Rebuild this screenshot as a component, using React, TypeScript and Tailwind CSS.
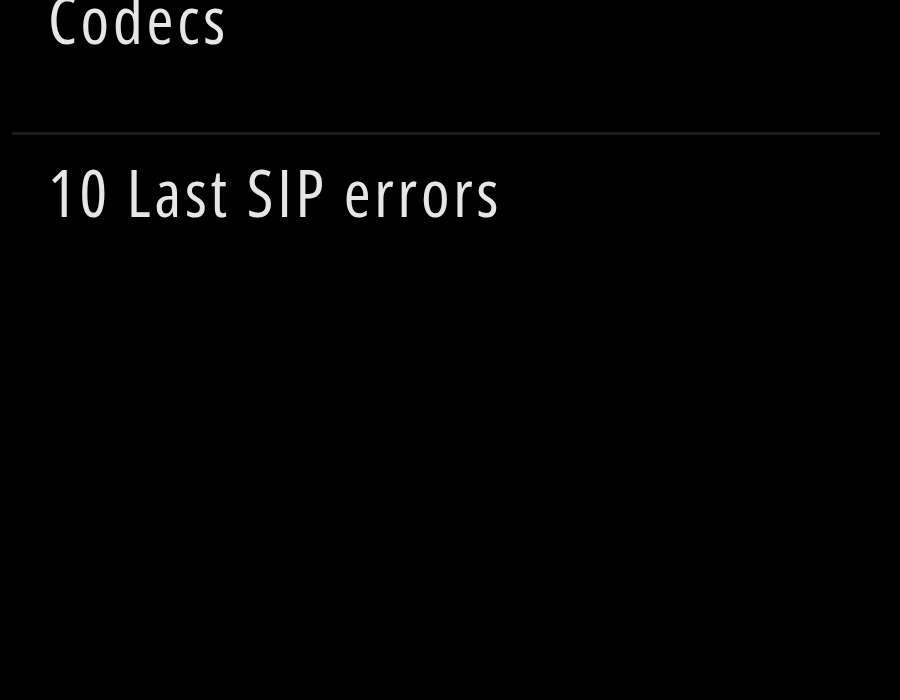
const App = () => {
  return (
    <div className="w-[900px] h-[700px] bg-black overflow-hidden font-['Open_Sans',sans-serif] font-stretch-condensed text-[#e6e6e6]">
      {/* Codecs row */}
      <div className="h-[132px] pl-[48px] pr-[20px] flex flex-col">
        <div className="text-[65px] leading-[65px] -mt-[13px] tracking-[3.8px]">Codecs</div>
      </div>

      {/* Divider */}
      <div className="ml-[12px] mr-[20px] h-[3px] bg-[#1c1c1c]" />

      {/* 10 Last SIP errors row */}
      <div className="pl-[48px] pt-[25px]">
        <div className="text-[65px] leading-[65px] tracking-[3.8px]">10 Last SIP errors</div>
      </div>
    </div>
  );
};

export default App;
